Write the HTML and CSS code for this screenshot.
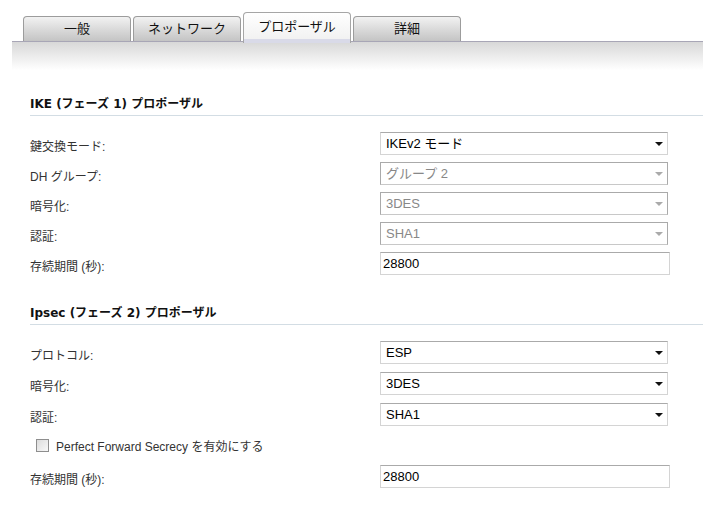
FILE: index.html
```html
<!DOCTYPE html>
<html lang="ja">
<head>
    <meta charset="UTF-8">
    <title>プロポーザル</title>
    <link rel="stylesheet" href="styles.css">
</head>
<body>
    <div class="tabbar">
        <div class="tab">一般</div>
        <div class="tab">ネットワーク</div>
        <div class="tab active">プロポーザル</div>
        <div class="tab">詳細</div>
    </div>
    <div class="tab-shade"></div>

    <div class="section section-ike">
        <h3 class="section-title">IKE (フェーズ 1) プロポーザル</h3>
        <div class="row">
            <label>鍵交換モード:</label>
            <div class="select-wrap">
                <select><option>IKEv2 モード</option></select>
            </div>
        </div>
        <div class="row">
            <label>DH グループ:</label>
            <div class="select-wrap disabled">
                <select disabled><option>グループ 2</option></select>
            </div>
        </div>
        <div class="row">
            <label>暗号化:</label>
            <div class="select-wrap disabled">
                <select disabled><option>3DES</option></select>
            </div>
        </div>
        <div class="row">
            <label>認証:</label>
            <div class="select-wrap disabled">
                <select disabled><option>SHA1</option></select>
            </div>
        </div>
        <div class="row">
            <label>存続期間 (秒):</label>
            <input type="text" class="text-input" value="28800">
        </div>
    </div>

    <div class="section section-ipsec">
        <h3 class="section-title">Ipsec (フェーズ 2) プロポーザル</h3>
        <div class="row">
            <label>プロトコル:</label>
            <div class="select-wrap">
                <select><option>ESP</option></select>
            </div>
        </div>
        <div class="row">
            <label>暗号化:</label>
            <div class="select-wrap">
                <select><option>3DES</option></select>
            </div>
        </div>
        <div class="row">
            <label>認証:</label>
            <div class="select-wrap">
                <select><option>SHA1</option></select>
            </div>
        </div>
        <div class="row check-row">
            <input type="checkbox" class="check" id="pfs">
            <label for="pfs">Perfect Forward Secrecy を有効にする</label>
        </div>
        <div class="row">
            <label>存続期間 (秒):</label>
            <input type="text" class="text-input" value="28800">
        </div>
    </div>
</body>
</html>
```

FILE: styles.css
```css
* {
    box-sizing: border-box;
}

body {
    margin: 0;
    background: #fff;
    color: #333;
    font-family: "Liberation Sans", "Noto Sans CJK JP", sans-serif;
    font-size: 12px;
}

/* tabs */
.tabbar {
    display: flex;
    align-items: flex-end;
    gap: 2px;
    height: 42px;
    margin-left: 12px;
    padding-left: 11px;
    border-bottom: 1px solid #a8a6b6;
}

.tab {
    width: 108px;
    height: 25px;
    border: 1px solid #9c9c9c;
    border-bottom: none;
    border-radius: 4px 4px 0 0;
    background: linear-gradient(#f2f2f2, #d6d6d6 60%, #c4c4c4);
    color: #111;
    font-size: 13px;
    line-height: 23px;
    text-align: center;
}

.tab.active {
    height: 31px;
    margin-bottom: -2px;
    border-color: #a6a6a6;
    background: linear-gradient(#ffffff, #f2f2f2 85%, #d9dae8 88%, #d9dae8);
    line-height: 27px;
    position: relative;
}

.tab-shade {
    height: 28px;
    margin-left: 12px;
    background: linear-gradient(#d8d8d8, #ffffff);
}

/* form sections */
.section {
    padding: 0 0 0 30px;
}

.section-ike {
    margin-top: 26px;
}

.section-ipsec {
    margin-top: 27px;
}

.section-title {
    margin: 0 0 12px;
    padding-bottom: 3px;
    border-bottom: 1px solid #d3dde4;
    color: #111;
    font-family: "DejaVu Sans", "Noto Sans CJK JP", sans-serif;
    font-size: 12px;
    font-weight: bold;
    line-height: 16px;
}

.row {
    display: flex;
    align-items: center;
    height: 30px;
}

.section-ipsec .row {
    height: 31px;
}

.row > label {
    width: 350px;
    flex-shrink: 0;
    padding-top: 4px;
}

.select-wrap {
    position: relative;
    width: 288px;
}

.select-wrap::after {
    content: "";
    position: absolute;
    right: 5px;
    top: 10px;
    border-left: 4px solid transparent;
    border-right: 4px solid transparent;
    border-top: 4px solid #111;
    pointer-events: none;
}

.select-wrap.disabled::after {
    border-top-color: #aaa;
}

select {
    appearance: none;
    width: 100%;
    height: 23px;
    padding: 0 20px 0 5px;
    border: 1px solid #d4d4d4;
    border-top-color: #aaa;
    border-radius: 0;
    background: #fff;
    color: #000;
    font-family: "Liberation Sans", "Noto Sans CJK JP", sans-serif;
    font-size: 13px;
}

select:disabled {
    color: #888;
    border-color: #aaa;
    border-bottom-color: #c8c8c8;
    opacity: 1;
}

.text-input {
    width: 290px;
    height: 23px;
    padding: 0 2px;
    border: 1px solid #d4d4d4;
    border-top-color: #aaa;
    color: #000;
    font-family: "Liberation Sans", "Noto Sans CJK JP", sans-serif;
    font-size: 13px;
    outline: none;
}

.check-row {
    padding-left: 6px;
}

.check {
    appearance: none;
    width: 13px;
    height: 13px;
    margin: 0 7px 0 0;
    border: 1px solid #8e8e8e;
    background: linear-gradient(135deg, #dcdcdc, #f8f8f8);
}

.check-row label {
    width: auto;
    padding-top: 0;
}
```
